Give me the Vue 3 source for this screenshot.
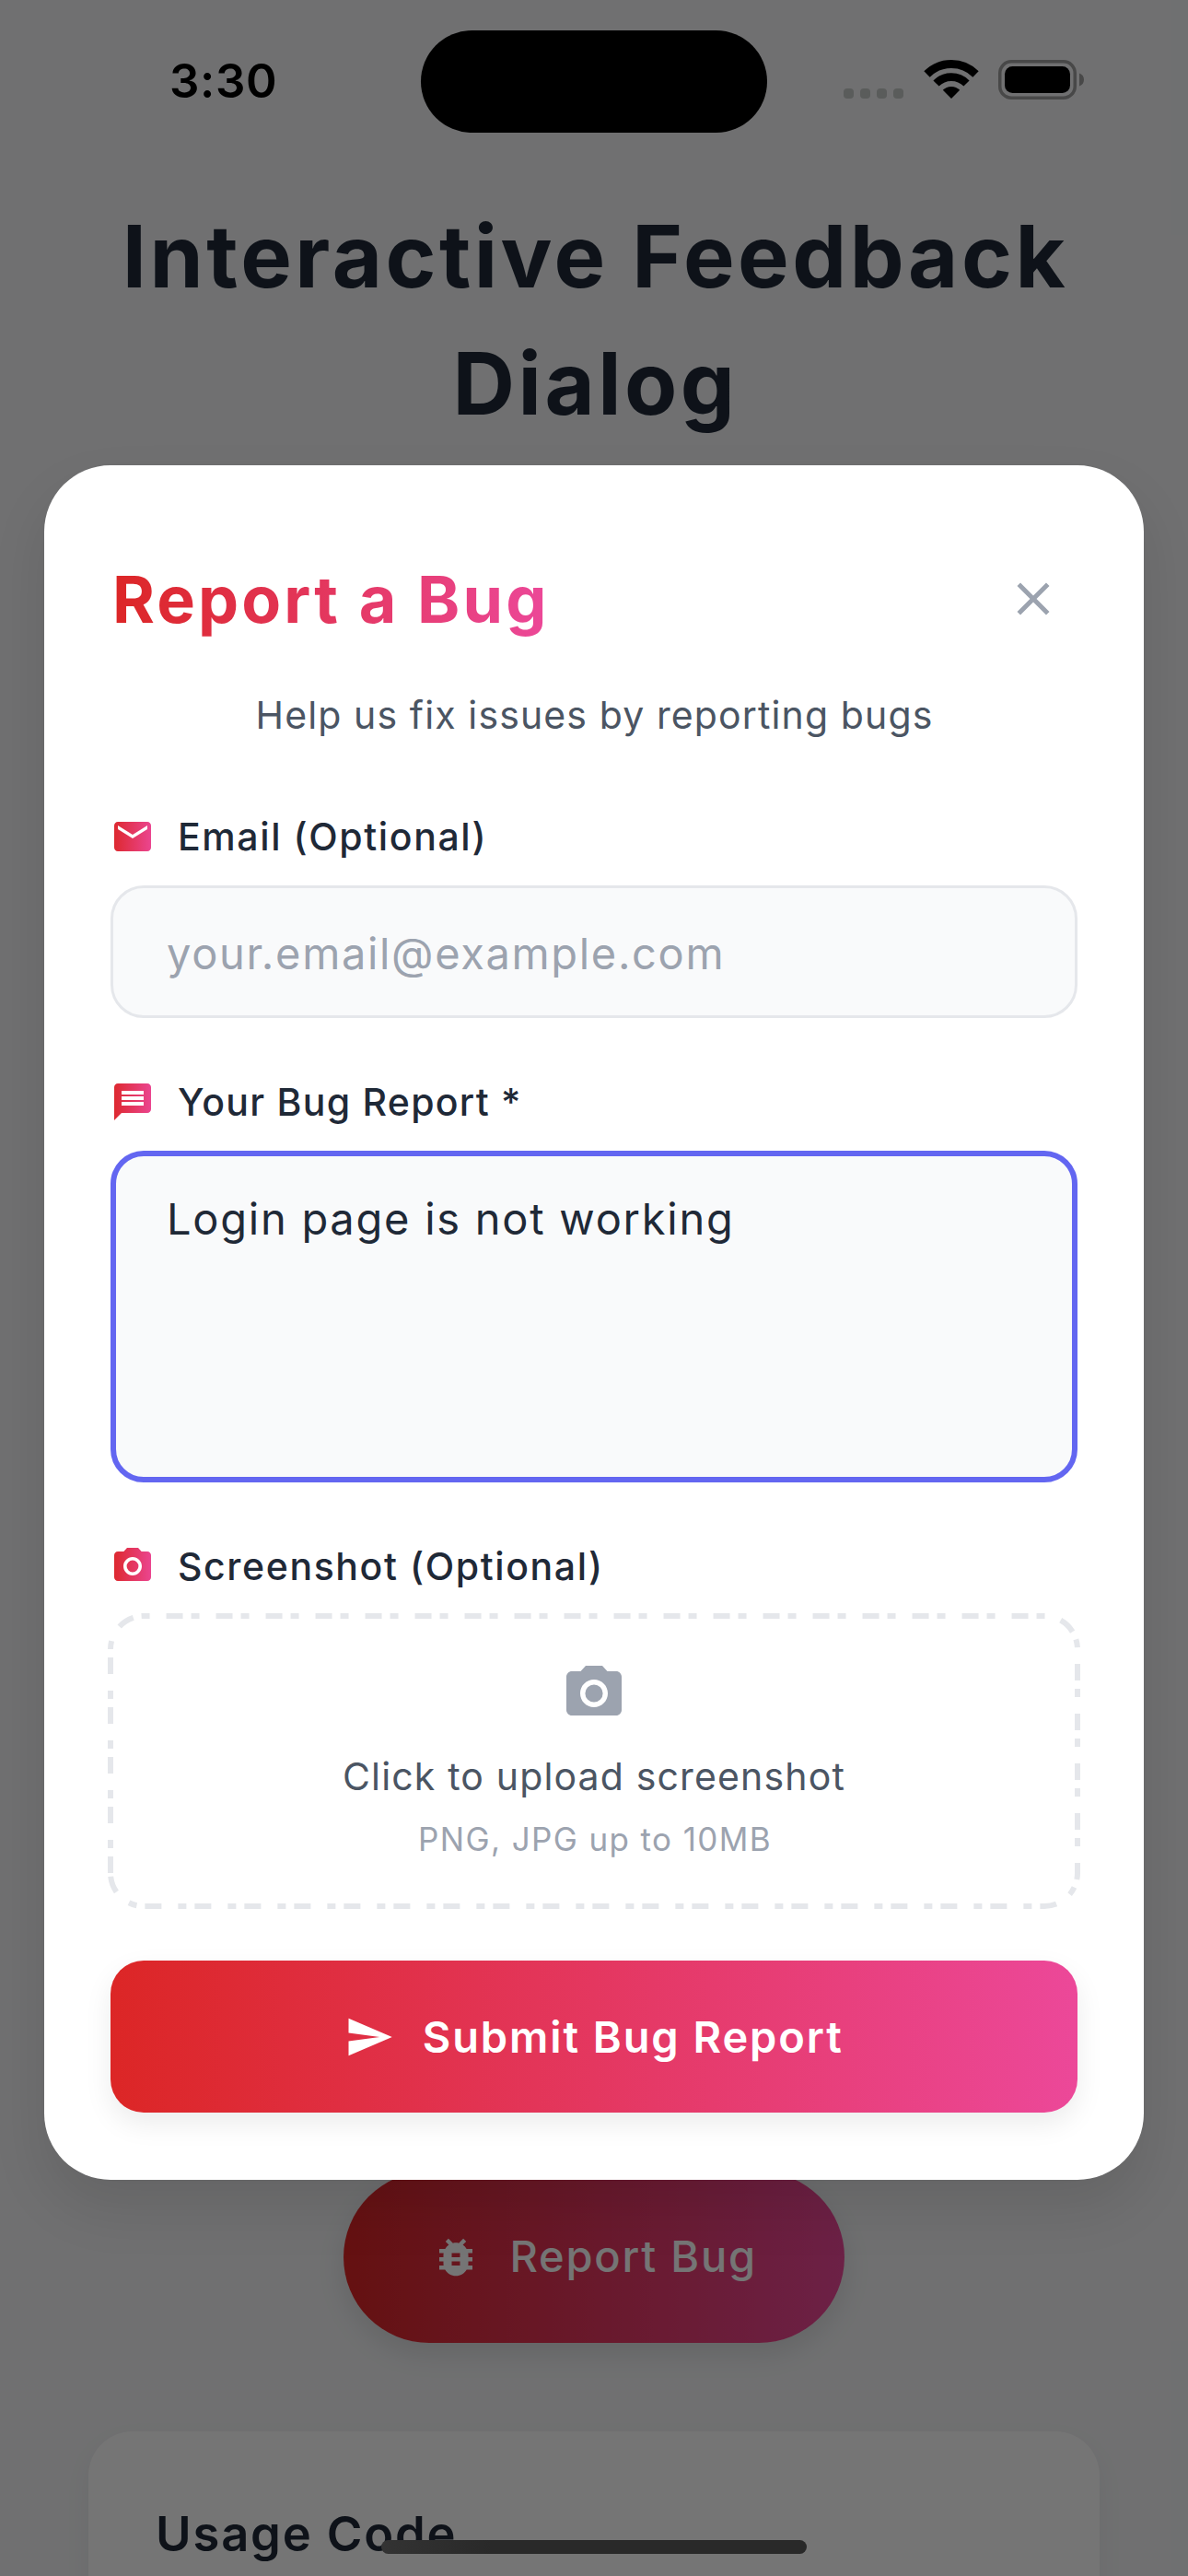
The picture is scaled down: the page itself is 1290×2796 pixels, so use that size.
<script setup>
import { ref } from 'vue'

const email = ref('')
const report = ref('Login page is not working')

const icons = {
  mail: 'M20 4H4c-1.1 0-1.99.9-1.99 2L2 18c0 1.1.9 2 2 2h16c1.1 0 2-.9 2-2V6c0-1.1-.9-2-2-2zm0 4l-8 5-8-5V6l8 5 8-5v2z',
  message: 'M20 2H4c-1.1 0-1.99.9-1.99 2L2 22l4-4h14c1.1 0 2-.9 2-2V4c0-1.1-.9-2-2-2zm-2 12H6v-2h12v2zm0-3H6V9h12v2zm0-3H6V6h12v2z',
  camera: 'M12 8.8a3.2 3.2 0 1 0 0 6.4 3.2 3.2 0 0 0 0-6.4zM9 2L7.17 4H4c-1.1 0-2 .9-2 2v12c0 1.1.9 2 2 2h16c1.1 0 2-.9 2-2V6c0-1.1-.9-2-2-2h-3.17L15 2H9zm3 15c-2.76 0-5-2.24-5-5s2.24-5 5-5 5 2.24 5 5-2.24 5-5 5z',
  close: 'M19 6.41L17.59 5 12 10.59 6.41 5 5 6.41 10.59 12 5 17.59 6.41 19 12 13.41 17.59 19 19 17.59 13.41 12z',
  send: 'M2.01 21L23 12 2.01 3 2 10l15 2-15 2z',
  bug: 'M20 8h-2.81c-.45-.78-1.07-1.45-1.82-1.96L17 4.41 15.59 3l-2.17 2.17C12.96 5.06 12.49 5 12 5c-.49 0-.96.06-1.41.17L8.41 3 7 4.41l1.62 1.63C7.88 6.55 7.26 7.22 6.81 8H4v2h2.09c-.05.33-.09.66-.09 1v1H4v2h2v1c0 .34.04.67.09 1H4v2h2.81c1.04 1.79 2.97 3 5.19 3s4.15-1.21 5.19-3H20v-2h-2.09c.05-.33.09-.66.09-1v-1h2v-2h-2v-1c0-.34-.04-.67-.09-1H20V8zm-6 8h-4v-2h4v2zm0-4h-4v-2h4v2z',
}
</script>

<template>
  <div class="screen">
    <svg class="defs" width="0" height="0" aria-hidden="true">
      <defs>
        <linearGradient id="accent" gradientUnits="userSpaceOnUse" x1="0" y1="0" x2="24" y2="0">
          <stop offset="0" stop-color="#dc2626" />
          <stop offset="1" stop-color="#ec4899" />
        </linearGradient>
      </defs>
    </svg>

    <main class="page">
      <h1 class="page-title">Interactive Feedback Dialog</h1>
      <button class="pill">
        <svg class="i54" viewBox="0 0 24 24"><path :d="icons.bug" fill="#fff" /></svg>
        <span>Report Bug</span>
      </button>
      <section class="card">
        <h2 class="card-title">Usage Code</h2>
      </section>
    </main>

    <div class="overlay">
      <section class="dialog" role="dialog">
        <header class="head">
          <h2 class="dialog-title">Report a Bug</h2>
          <button class="close" aria-label="Close">
            <svg class="i60" viewBox="0 0 24 24"><path :d="icons.close" fill="#9ca3af" /></svg>
          </button>
        </header>
        <p class="subtitle">Help us fix issues by reporting bugs</p>

        <label class="label first">
          <svg class="i48" viewBox="0 0 24 24"><path :d="icons.mail" fill="url(#accent)" /></svg>
          <span>Email (Optional)</span>
        </label>
        <input v-model="email" class="input" placeholder="your.email@example.com" />

        <label class="label report-label">
          <svg class="i48" viewBox="0 0 24 24"><path :d="icons.message" fill="url(#accent)" /></svg>
          <span>Your Bug Report *</span>
        </label>
        <textarea v-model="report" class="textarea" spellcheck="false"></textarea>

        <label class="label">
          <svg class="i48" viewBox="0 0 24 24"><path :d="icons.camera" fill="url(#accent)" /></svg>
          <span>Screenshot (Optional)</span>
        </label>
        <div class="upload">
          <svg class="dashes" viewBox="0 0 1050 315" fill="none">
            <path
              d="M0 279V36A36 36 0 0 1 36 0H1014A36 36 0 0 1 1050 36V279A36 36 0 0 1 1014 315H36A36 36 0 0 1 0 279"
              stroke="#e5e7eb" stroke-width="6" stroke-dasharray="18 9 9 18"
            />
          </svg>
          <svg class="i72" viewBox="0 0 24 24"><path :d="icons.camera" fill="#9ca3af" /></svg>
          <span class="upload-text">Click to upload screenshot</span>
          <span class="upload-hint">PNG, JPG up to 10MB</span>
        </div>

        <button class="submit">
          <svg class="i54" viewBox="0 0 24 24"><path :d="icons.send" fill="#fff" /></svg>
          <span>Submit Bug Report</span>
        </button>
      </section>
    </div>

    <div class="status">
      <span class="time">3:30</span>
      <div class="island"></div>
      <div class="indicators">
        <div class="signal"><i v-for="n in 4" :key="n"></i></div>
        <svg class="wifi" viewBox="0 0 60 43" fill="none" stroke="#000">
          <path d="M3.5 15.5A37.5 37.5 0 0 1 56.5 15.5" stroke-width="9" />
          <path d="M13.5 25.5A23.3 23.3 0 0 1 46.5 25.5" stroke-width="8.7" />
          <path d="M30 42L20.8 32.8A13 13 0 0 1 39.2 32.8Z" fill="#000" stroke="none" />
        </svg>
        <svg class="battery" viewBox="0 0 94 43">
          <rect x="1.75" y="1.75" width="81.5" height="39.5" rx="12.5" fill="none" stroke="#484848" stroke-width="3.5" />
          <rect x="7" y="7" width="71" height="29" rx="8.5" fill="#000" />
          <path d="M88 14.5C91.5 15.6 93 18.6 93 21.5S91.5 27.4 88 28.5Z" fill="#484848" />
        </svg>
      </div>
    </div>
    <div class="home-bar"></div>
  </div>
</template>

<style>
html,
body {
  margin: 0;
  background: #707172;
}
</style>

<style scoped>
.screen {
  position: relative;
  width: 1290px;
  height: 2796px;
  overflow: hidden;
  background: #f3f4f6;
  font-family: Inter, "Liberation Sans", sans-serif;
  color: #1f2937;
}
.screen * {
  box-sizing: border-box;
}
.defs {
  position: absolute;
}
svg {
  display: block;
  flex: none;
}
h1,
h2,
p {
  margin: 0;
}
button,
input,
textarea {
  font-family: inherit;
  border: 0;
  margin: 0;
  padding: 0;
  outline: 0;
}
.i48 { width: 48px; height: 48px; }
.i54 { width: 54px; height: 54px; }
.i60 { width: 60px; height: 60px; }
.i72 { width: 72px; height: 72px; }

/* page underneath */
.page {
  display: flex;
  flex-direction: column;
  align-items: center;
  padding: 209px 96px 0;
}
.page-title {
  width: 100%;
  height: 2148px;
  padding-left: 3px;
  font-size: 93.5px;
  font-weight: 700;
  line-height: 138px;
  letter-spacing: 3.5px;
  text-align: center;
}
.pill {
  display: flex;
  flex: none;
  align-items: center;
  justify-content: center;
  gap: 31.5px;
  width: 544px;
  height: 186px;
  border-radius: 93px;
  background: linear-gradient(90deg, #dc2626, #ec4899);
  box-shadow: 0 12px 30px rgba(0, 0, 0, 0.1);
  color: #fff;
  font-size: 47px;
  font-weight: 500;
  letter-spacing: 1.78px;
}
.pill span {
  padding-bottom: 3px;
}
.card {
  flex: none;
  width: 1098px;
  height: 400px;
  margin-top: 96px;
  padding: 73px 73px;
  border-radius: 48px;
  background: #fff;
  box-shadow: 0 12px 30px rgba(0, 0, 0, 0.05);
}
.card-title {
  font-size: 52.5px;
  font-weight: 600;
  line-height: 76px;
  letter-spacing: 1.83px;
}

/* modal */
.overlay {
  position: absolute;
  inset: 0;
  display: flex;
  align-items: flex-start;
  justify-content: center;
  padding-top: 505px;
  background: rgba(0, 0, 0, 0.54);
}
.dialog {
  display: flex;
  flex-direction: column;
  width: 1194px;
  height: 1861px;
  padding: 85px 72px 0;
  border-radius: 72px;
  background: #fff;
  box-shadow: 0 30px 60px rgba(0, 0, 0, 0.1);
}
.head {
  display: flex;
  align-items: center;
  justify-content: space-between;
  height: 120px;
}
.dialog-title {
  margin-left: 2px;
  padding-top: 2px;
  background: linear-gradient(90deg, #dc2626, #ec4899);
  background-clip: text;
  -webkit-background-clip: text;
  color: transparent;
  font-size: 70px;
  font-weight: 700;
  line-height: 96px;
  letter-spacing: 3.1px;
}
.close {
  display: flex;
  align-items: center;
  justify-content: center;
  width: 96px;
  height: 96px;
  background: none;
}
.subtitle {
  margin-top: 39px;
  padding-left: 1px;
  color: #4b5563;
  font-size: 41px;
  line-height: 54px;
  letter-spacing: 1.12px;
  text-align: center;
}
.label {
  display: flex;
  flex: none;
  align-items: center;
  gap: 25px;
  height: 48px;
  margin-top: 67px;
  font-size: 41px;
  font-weight: 500;
  line-height: 48px;
  letter-spacing: 1.6px;
}
.label.first {
  margin-top: 81px;
}
.label.report-label {
  letter-spacing: 1.27px;
}
.input {
  flex: none;
  width: 100%;
  height: 144px;
  margin-top: 29px;
  padding: 2px 58px 0;
  border: 3px solid #e5e7eb;
  border-radius: 36px;
  background: #f9fafb;
  color: #1f2937;
  font-size: 47px;
  letter-spacing: 1.66px;
}
.input::placeholder {
  color: #9ca3af;
  opacity: 1;
}
.textarea {
  flex: none;
  display: block;
  width: 100%;
  height: 360px;
  margin-top: 29px;
  padding: 32px 55px;
  border: 6px solid #6366f1;
  border-radius: 36px;
  background: #f9fafb;
  color: #1f2937;
  font-size: 47px;
  line-height: 72px;
  letter-spacing: 1.74px;
  resize: none;
  overflow: hidden;
}
.upload {
  position: relative;
  display: flex;
  flex: none;
  flex-direction: column;
  align-items: center;
  height: 315px;
  margin-top: 29.5px;
  padding-top: 48.5px;
}
.dashes {
  position: absolute;
  inset: 0;
  width: 1050px;
  height: 315px;
  overflow: visible;
}
.upload-text {
  margin-top: 27px;
  color: #4b5563;
  font-size: 41px;
  line-height: 54px;
  letter-spacing: 1.15px;
}
.upload-hint {
  margin-top: 19px;
  padding-left: 2px;
  color: #9ca3af;
  font-size: 35px;
  line-height: 44px;
  letter-spacing: 1.38px;
}
.submit {
  display: flex;
  flex: none;
  align-items: center;
  justify-content: center;
  gap: 30.5px;
  height: 165px;
  margin-top: 59.5px;
  border-radius: 36px;
  background: linear-gradient(90deg, #dc2626, #ec4899);
  box-shadow: 0 12px 30px rgba(0, 0, 0, 0.08);
  color: #fff;
  font-size: 47px;
  font-weight: 600;
  letter-spacing: 1.91px;
}

/* system chrome */
.status {
  position: absolute;
  inset: 0 0 auto;
  display: flex;
  align-items: flex-start;
  height: 160px;
  color: #000;
}
.time {
  width: 457px;
  padding: 57px 0 0 184px;
  font-size: 51px;
  font-weight: 600;
  line-height: 62px;
  letter-spacing: 0.6px;
}
.island {
  width: 376px;
  height: 111px;
  margin-top: 33px;
  border-radius: 56px;
  background: #000;
}
.indicators {
  display: flex;
  align-items: flex-start;
  padding: 65px 0 0 83px;
}
.signal {
  display: flex;
  gap: 7px;
  margin-top: 31px;
}
.signal i {
  width: 11px;
  height: 11px;
  border-radius: 4px;
  background: #5a5c5b;
}
.wifi {
  width: 60px;
  height: 43px;
  margin-left: 21.5px;
}
.battery {
  width: 94px;
  height: 43px;
  margin-left: 21.5px;
}
.home-bar {
  position: absolute;
  left: 414px;
  top: 2757px;
  width: 462px;
  height: 15px;
  border-radius: 8px;
  background: linear-gradient(90deg, #333, #292929 26%);
}
</style>
